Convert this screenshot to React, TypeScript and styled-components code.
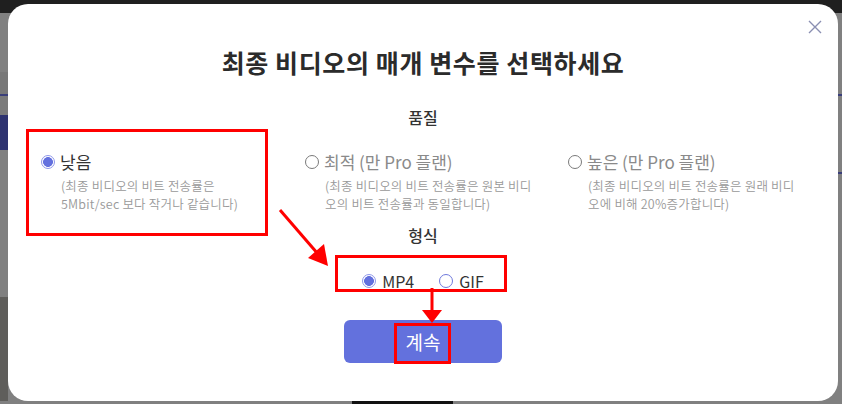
import React from "react";
import styled, { createGlobalStyle } from "styled-components";

const GlobalStyle = createGlobalStyle`
  html, body {
    margin: 0;
    padding: 0;
  }
  body {
    font-family: "Noto Sans CJK KR", "Noto Sans", sans-serif;
    color: #333;
  }
`;

const RED = "#ff0000";

const Backdrop = styled.div`
  width: 842px;
  height: 404px;
  box-sizing: border-box;
  padding: 4px 4px 3px 8px;
  overflow: hidden;
  background:
    linear-gradient(90deg, #808080 0 352px, #111 352px 453px, #808080 453px) left bottom / 100% 3px no-repeat,
    linear-gradient(#1f1f1f 0 13px, #808080 13px 72px, #787878 72px 94px, #3a3f7a 94px 96px, #7b7b7b 96px 115px, #2e3370 115px 150px, #808080 150px 297px, #5f5e5b 297px) left top / 8px 100% no-repeat,
    linear-gradient(#1f1f1f 0 13px, #808080 13px 94px, #3a3f7a 94px 96px, #808080 96px 172px, #3a3f7a 172px 174px, #808080 174px);
`;

const Modal = styled.div`
  position: relative;
  height: 100%;
  box-sizing: border-box;
  background: #fff;
  border-radius: 20px;
  padding-top: 40px;
  display: flex;
  flex-direction: column;
  align-items: center;
`;

const Close = styled.button`
  position: absolute;
  top: 15px;
  right: 15px;
  width: 16px;
  height: 16px;
  padding: 0;
  border: none;
  background: none;
  display: flex;
  align-items: center;
  justify-content: center;
`;

const Title = styled.h1`
  margin: 0;
  font-size: 25px;
  line-height: 36px;
  letter-spacing: 0.6px;
  font-weight: 700;
  color: #2b2b2b;
`;

const SectionLabel = styled.div<{ $gap: number }>`
  margin-top: ${({ $gap }) => $gap}px;
  font-size: 16px;
  line-height: 24px;
  font-weight: 500;
  color: #333;
`;

const Options = styled.div`
  align-self: stretch;
  margin-top: 21px;
  padding-left: 33px;
  display: grid;
  grid-template-columns: 264px 263px 1fr;
`;

const Option = styled.div`
  display: flex;
  flex-direction: column;
`;

const OptionHead = styled.label<{ $muted?: boolean }>`
  display: flex;
  align-items: center;
  gap: 5px;
  font-size: 17px;
  line-height: 24px;
  font-weight: 400;
  color: ${({ $muted }) => ($muted ? "#8a8a8a" : "#333")};
`;

const Desc = styled.div`
  margin-top: 3px;
  padding-left: 20px;
  font-size: 12.5px;
  line-height: 18px;
  letter-spacing: 0.2px;
  font-weight: 350;
  color: #999;
`;

const Radio = styled.span<{ $checked?: boolean; $tone?: "gray" | "blue" }>`
  box-sizing: border-box;
  flex: none;
  width: 14px;
  height: 14px;
  border-radius: 50%;
  border: 1px solid
    ${({ $checked, $tone }) => ($checked ? "#8f97ea" : $tone === "blue" ? "#6f79dc" : "#7a7a7a")};
  background: ${({ $checked }) =>
    $checked ? "radial-gradient(circle, #6370de 0 4.6px, #fff 5.2px)" : "#fff"};
`;

const Formats = styled.div`
  margin-top: 22px;
  display: flex;
  align-items: center;
  gap: 25px;
`;

const FormatItem = styled.label`
  display: flex;
  align-items: center;
  gap: 6px;
  font-size: 16px;
  line-height: 24px;
  color: #333;
`;

const ContinueButton = styled.button`
  margin-top: 27px;
  width: 158px;
  height: 43px;
  border: none;
  border-radius: 6px;
  background: #6371dd;
  color: #fff;
  font-family: inherit;
  font-size: 19px;
  font-weight: 400;
`;

const RedBox = styled.div<{ $x: number; $y: number; $w: number; $h: number }>`
  position: absolute;
  left: ${({ $x }) => $x}px;
  top: ${({ $y }) => $y}px;
  width: ${({ $w }) => $w}px;
  height: ${({ $h }) => $h}px;
  box-sizing: border-box;
  border: 3px solid ${RED};
  pointer-events: none;
`;

const ArrowLayer = styled.svg`
  position: absolute;
  inset: 0;
  width: 100%;
  height: 100%;
  pointer-events: none;
`;

const qualities = [
  {
    label: "낮음",
    checked: true,
    lines: ["(최종 비디오의 비트 전송률은", "5Mbit/sec 보다 작거나 같습니다)"],
  },
  {
    label: "최적 (만 Pro 플랜)",
    lines: ["(최종 비디오의 비트 전송률은 원본 비디", "오의 비트 전송률과 동일합니다)"],
  },
  {
    label: "높은 (만 Pro 플랜)",
    lines: ["(최종 비디오의 비트 전송률은 원래 비디", "오에 비해 20%증가합니다)"],
  },
];

export default function App() {
  return (
    <>
      <GlobalStyle />
      <Backdrop>
        <Modal>
          <Close aria-label="닫기">
            <svg width="14" height="14" viewBox="0 0 14 14">
              <path d="M1 1 L13 13 M13 1 L1 13" stroke="#8a8fb2" strokeWidth="1.4" fill="none" />
            </svg>
          </Close>

          <Title>최종 비디오의 매개 변수를 선택하세요</Title>

          <SectionLabel $gap={25}>품질</SectionLabel>
          <Options>
            {qualities.map((q) => (
              <Option key={q.label}>
                <OptionHead $muted={!q.checked}>
                  <Radio $checked={q.checked} />
                  {q.label}
                </OptionHead>
                <Desc>
                  {q.lines.map((l) => (
                    <div key={l}>{l}</div>
                  ))}
                </Desc>
              </Option>
            ))}
          </Options>

          <SectionLabel $gap={10}>형식</SectionLabel>
          <Formats>
            <FormatItem>
              <Radio $checked />
              MP4
            </FormatItem>
            <FormatItem>
              <Radio $tone="blue" />
              GIF
            </FormatItem>
          </Formats>

          <ContinueButton>계속</ContinueButton>

          <RedBox $x={18} $y={125} $w={242} $h={107} />
          <RedBox $x={327} $y={251} $w={172} $h={37} />
          <RedBox $x={386} $y={319} $w={57} $h={41} />
          <ArrowLayer viewBox="0 0 830 397">
            <line x1="272" y1="206" x2="310" y2="250" stroke={RED} strokeWidth="3" />
            <polygon points="320,262 300,254 316,240" fill={RED} />
            <line x1="424" y1="284" x2="424" y2="308" stroke={RED} strokeWidth="3" />
            <polygon points="414,306 434,306 424,319" fill={RED} />
          </ArrowLayer>
        </Modal>
      </Backdrop>
    </>
  );
}
